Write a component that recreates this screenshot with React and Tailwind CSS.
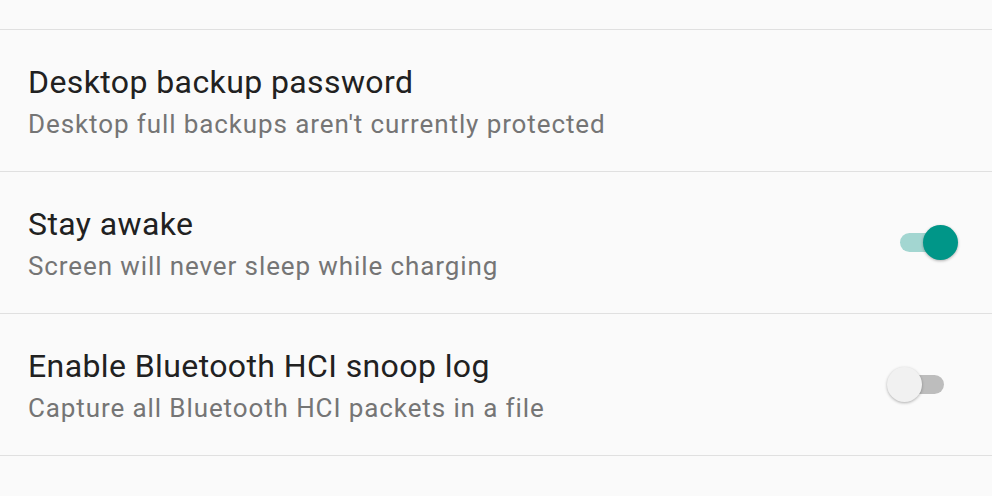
import React, { useState } from 'react';

const Toggle = ({ checked, onChange }) => (
  <button
    type="button"
    onClick={() => onChange(!checked)}
    className="relative block w-[71px] h-[36px] shrink-0"
  >
    <span
      className={`absolute left-[13px] top-[8px] w-[44px] h-[19px] rounded-full ${
        checked ? 'bg-[#a3d6d1]' : 'bg-[#bdbdbd]'
      }`}
    />
    <span
      className={`absolute top-0 w-[35px] h-[35px] rounded-full shadow-[0_1px_3px_rgba(0,0,0,0.3)] ${
        checked ? 'right-0 bg-[#009688]' : 'left-0 bg-[#f1f1f1]'
      }`}
    />
  </button>
);

const SettingRow = ({ title, summary, checked, onToggle }) => (
  <div className="h-[142px] border-t border-[#e0e0e0] flex items-start justify-between pl-[28px] pr-[34px]">
    <div className="pt-[31px]">
      <div className="text-[32px] leading-[42px] tracking-[0.4px] text-[#212121]">{title}</div>
      <div className="text-[26px] leading-[43px] tracking-[0.9px] text-[#757575]">{summary}</div>
    </div>
    {onToggle && (
      <div className="self-center flex">
        <Toggle checked={checked} onChange={onToggle} />
      </div>
    )}
  </div>
);

export default function App() {
  const [stayAwake, setStayAwake] = useState(true);
  const [snoopLog, setSnoopLog] = useState(false);

  return (
    <div className="w-[992px] h-[496px] overflow-hidden bg-[#fafafa] font-['Roboto',sans-serif]">
      <div className="h-[29px]" />
      <SettingRow
        title="Desktop backup password"
        summary="Desktop full backups aren't currently protected"
      />
      <SettingRow
        title="Stay awake"
        summary="Screen will never sleep while charging"
        checked={stayAwake}
        onToggle={setStayAwake}
      />
      <SettingRow
        title="Enable Bluetooth HCI snoop log"
        summary="Capture all Bluetooth HCI packets in a file"
        checked={snoopLog}
        onToggle={setSnoopLog}
      />
      <div className="border-t border-[#e0e0e0]" />
    </div>
  );
}
